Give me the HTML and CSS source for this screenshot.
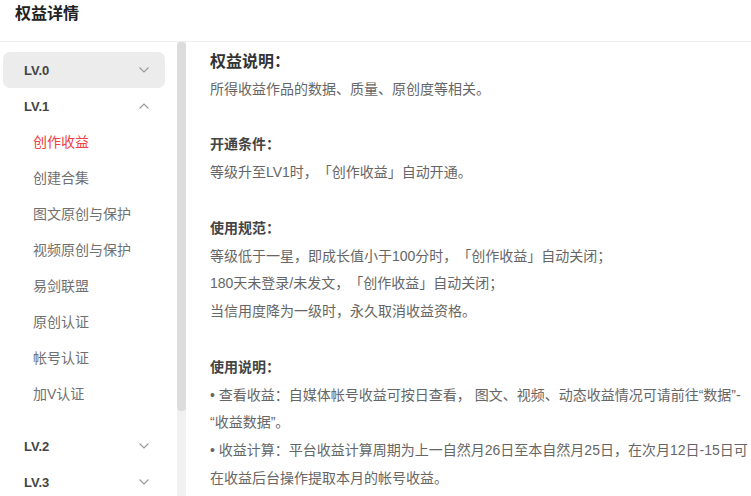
FILE: index.html
```html
<!DOCTYPE html>
<html lang="zh-CN">
<head>
    <meta charset="UTF-8">
    <meta name="viewport" content="width=device-width, initial-scale=1.0">
    <title>权益详情</title>
    <link rel="stylesheet" href="styles.css">
</head>
<body>
    <div class="page">
        <div class="header">
            <h1 class="title">权益详情</h1>
        </div>
        <div class="main">
            <div class="side">
                <div class="level active">
                    <span>LV.0</span>
                    <svg class="arrow" width="10" height="6" viewBox="0 0 10 6"><polyline points="0.5,0.5 5,5 9.5,0.5" /></svg>
                </div>
                <div class="level">
                    <span>LV.1</span>
                    <svg class="arrow" width="10" height="6" viewBox="0 0 10 6"><polyline points="0.5,5.5 5,1 9.5,5.5" /></svg>
                </div>
                <ul class="sub">
                    <li class="cur">创作收益</li>
                    <li>创建合集</li>
                    <li>图文原创与保护</li>
                    <li>视频原创与保护</li>
                    <li>易剑联盟</li>
                    <li>原创认证</li>
                    <li>帐号认证</li>
                    <li>加V认证</li>
                </ul>
                <div class="level">
                    <span>LV.2</span>
                    <svg class="arrow" width="10" height="6" viewBox="0 0 10 6"><polyline points="0.5,0.5 5,5 9.5,0.5" /></svg>
                </div>
                <div class="level">
                    <span>LV.3</span>
                    <svg class="arrow" width="10" height="6" viewBox="0 0 10 6"><polyline points="0.5,0.5 5,5 9.5,0.5" /></svg>
                </div>
            </div>
            <div class="bar">
                <div class="thumb"></div>
            </div>
            <div class="content">
                <h2 class="big">权益说明：</h2>
                <p>所得收益作品的数据、质量、原创度等相关。</p>

                <h3>开通条件：</h3>
                <p>等级升至LV1时，「创作收益」自动开通。</p>

                <h3>使用规范：</h3>
                <p>等级低于一星，即成长值小于100分时，「创作收益」自动关闭；</p>
                <p>180天未登录/未发文，「创作收益」自动关闭；</p>
                <p>当信用度降为一级时，永久取消收益资格。</p>

                <h3>使用说明：</h3>
                <p>• 查看收益：自媒体帐号收益可按日查看， 图文、视频、动态收益情况可请前往“数据”-“收益数据”。</p>
                <p>• 收益计算：平台收益计算周期为上一自然月26日至本自然月25日，在次月12日-15日可在收益后台操作提取本月的帐号收益。</p>
            </div>
        </div>
    </div>
</body>
</html>
```

FILE: styles.css
```css
*{
    margin: 0;
    padding: 0;
    box-sizing: border-box;
}
body{
    background: #fff;
    font-family: "Liberation Sans", "Noto Sans CJK SC", sans-serif;
    color: #666;
    overflow: hidden;
    text-spacing-trim: space-all;
}
.page{
    width: 751px;
    height: 496px;
    overflow: hidden;
}
.header{
    height: 42px;
    border-bottom: 1px solid #eeeeee;
    padding-left: 15px;
}
.header .title{
    font-size: 16px;
    line-height: 28px;
    font-weight: bold;
    color: #222;
}
.main{
    display: flex;
    height: 454px;
}
.side{
    width: 177px;
    padding: 10px 12px 0 3px;
    overflow: hidden;
    flex-shrink: 0;
}
.side .level{
    height: 36px;
    display: flex;
    align-items: center;
    justify-content: space-between;
    padding: 0 16px 0 21px;
    border-radius: 7px;
    font-size: 13px;
    font-weight: bold;
    color: #444;
}
.side .level.active{
    background: #ececec;
}
.side .arrow{
    fill: none;
    stroke: #999;
    stroke-width: 1.1;
}
.side .sub{
    list-style: none;
    padding-bottom: 16px;
}
.side .sub li{
    height: 36px;
    line-height: 36px;
    padding-left: 30px;
    font-size: 14px;
    color: #707070;
}
.side .sub li.cur{
    color: #f04142;
}
.bar{
    width: 9px;
    flex-shrink: 0;
    background: #f1f1f1;
}
.bar .thumb{
    height: 369px;
    background: #dcdcdc;
    border-radius: 4px;
}
.content{
    flex: 1;
    padding: 6px 0 0 24px;
    font-size: 14px;
    line-height: 27.8px;
}
.content .big{
    font-size: 16px;
    font-weight: bold;
    color: #333;
}
.content h3{
    margin-top: 27.8px;
    font-size: 14px;
    font-weight: bold;
    color: #444;
}
```
